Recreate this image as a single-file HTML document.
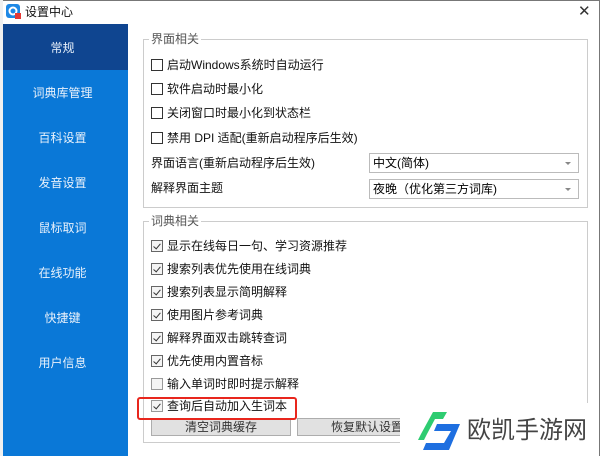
<!DOCTYPE html><html><head><meta charset="utf-8"><style>
*{margin:0;padding:0;box-sizing:border-box}
body{width:600px;height:456px;overflow:hidden;background:#fff;font-family:"Liberation Sans","Noto Sans CJK SC",sans-serif;font-size:12px;color:#000;position:relative}
.a{position:absolute}
.side{left:3px;top:24px;width:125px;height:432px;background:#0a78d7}
.si{position:absolute;left:0;width:125px;text-align:center;color:#e8f1fb;font-size:12px;line-height:16px}
.gb{position:absolute;border:1px solid #ccc}
.lg{position:absolute;background:#fff;color:#555;padding:0 2px;top:-9px;left:5px;line-height:16px}
.cb{position:absolute;width:12px;height:12px;border:1px solid #333;background:#fff}
.ck{border-color:#666;background:#f4f4f4}
.ck:after{content:"";position:absolute;left:3px;top:1px;width:3px;height:6px;border:solid #333;border-width:0 1px 1px 0;transform:rotate(40deg)}
.t{position:absolute;line-height:14px;white-space:nowrap;color:#111}
.sel{position:absolute;left:369px;width:210px;height:20px;border:1px solid #bbb;background:#fff;padding-left:3px;line-height:18px}
.sel:after{content:"";position:absolute;right:7px;top:8px;border:3px solid transparent;border-top:3px solid #888}
.btn{position:absolute;top:418px;height:18px;border:1px solid #adadad;background:#e1e1e1;text-align:center;line-height:16px;color:#333}
</style></head><body>
<div class="a" style="left:0;top:0;width:600px;height:1px;background:#777"></div>
<div class="a" style="left:599px;top:0;width:1px;height:456px;background:#777"></div>
<div class="a" style="left:0;top:0;width:3px;height:456px;background:#f0f0f0"></div>
<svg class="a" style="left:6px;top:4px" width="16" height="16"><rect x="0" y="0" width="14" height="14" rx="3" fill="#1e88e5"/><circle cx="7" cy="7" r="3.5" fill="none" stroke="#fff" stroke-width="2"/><rect x="9" y="9" width="6" height="6" fill="#e53935"/></svg>
<div class="t" style="left:25px;top:5px">设置中心</div>
<div class="a" style="left:578px;top:5px;font-size:15px;color:#333;line-height:14px">✕</div>
<div class="a side"></div>
<div class="a" style="left:3px;top:24px;width:125px;height:46px;background:#0f4590"></div>
<div class="si" style="top:40px">常规</div>
<div class="si" style="top:85px">词典库管理</div>
<div class="si" style="top:130px">百科设置</div>
<div class="si" style="top:175px">发音设置</div>
<div class="si" style="top:220px">鼠标取词</div>
<div class="si" style="top:265px">在线功能</div>
<div class="si" style="top:310px">快捷键</div>
<div class="si" style="top:355px">用户信息</div>

<div class="gb" style="left:143px;top:39px;width:445px;height:169px"><div class="lg">界面相关</div></div>
<div class="cb" style="left:151px;top:59px"></div><div class="t" style="left:167px;top:58px">启动Windows系统时自动运行</div>
<div class="cb" style="left:151px;top:83px"></div><div class="t" style="left:167px;top:82px">软件启动时最小化</div>
<div class="cb" style="left:151px;top:107px"></div><div class="t" style="left:167px;top:106px">关闭窗口时最小化到状态栏</div>
<div class="cb" style="left:151px;top:132px"></div><div class="t" style="left:167px;top:131px">禁用 DPI 适配(重新启动程序后生效)</div>
<div class="t" style="left:151px;top:156px">界面语言(重新启动程序后生效)</div>
<div class="sel" style="top:153px">中文(简体)</div>
<div class="t" style="left:151px;top:181px">解释界面主题</div>
<div class="sel" style="top:179px">夜晚（优化第三方词库)</div>

<div class="gb" style="left:143px;top:221px;width:445px;height:222px"><div class="lg">词典相关</div></div>
<div class="cb ck" style="left:151px;top:240px"></div><div class="t" style="left:167px;top:239px">显示在线每日一句、学习资源推荐</div>
<div class="cb ck" style="left:151px;top:263px"></div><div class="t" style="left:167px;top:262px">搜索列表优先使用在线词典</div>
<div class="cb ck" style="left:151px;top:286px"></div><div class="t" style="left:167px;top:285px">搜索列表显示简明解释</div>
<div class="cb ck" style="left:151px;top:309px"></div><div class="t" style="left:167px;top:308px">使用图片参考词典</div>
<div class="cb ck" style="left:151px;top:332px"></div><div class="t" style="left:167px;top:331px">解释界面双击跳转查词</div>
<div class="cb ck" style="left:151px;top:355px"></div><div class="t" style="left:167px;top:354px">优先使用内置音标</div>
<div class="a" style="left:151px;top:378px;width:12px;height:12px;border:1px solid #999;background:#f4f4f4"></div><div class="t" style="left:167px;top:377px">输入单词时即时提示解释</div>
<div class="cb ck" style="left:151px;top:400px;border-color:#999"></div><div class="t" style="left:167px;top:399px">查询后自动加入生词本</div>
<div class="btn" style="left:151px;width:140px">清空词典缓存</div>
<div class="btn" style="left:297px;width:140px">恢复默认设置</div>
<div class="a" style="left:137px;top:397px;width:160px;height:23px;border:2px solid #e8261d;border-radius:3px"></div>
<div class="a" style="left:400px;top:403px;width:198px;height:53px;background:#fff"></div>
<svg class="a" style="left:415px;top:410px" width="48" height="44" viewBox="0 0 48 44">
<path d="M18 2 L32 2 L28 9 L20 9 L12 24 L6 24 Z" fill="#2ecc71"/>
<path d="M6 24 L12 24 L9 30 L3 30 Z" fill="#2ecc71"/>
<path d="M22 14 L45 14 L34 40 L8 40 L11 33 L29 33 L36 21 L19 21 Z" fill="#1e6fe0"/>
</svg>
<div class="t" style="left:467px;top:417px;font-size:24px;line-height:28px;color:#444">欧凯手游网</div>
</body></html>
